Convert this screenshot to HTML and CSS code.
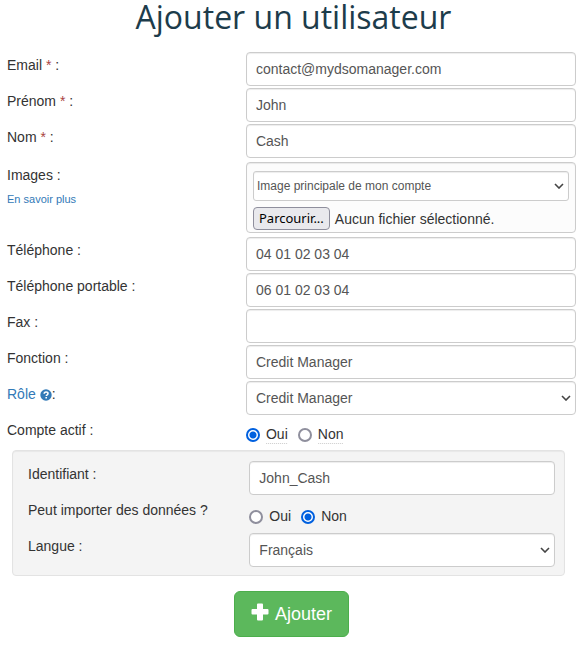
FILE: index.html
```html
<!DOCTYPE html>
<html lang="fr">
<head>
    <meta charset="UTF-8">
    <meta name="viewport" content="width=device-width, initial-scale=1.0">
    <title>Ajouter un utilisateur</title>
    <link rel="stylesheet" href="styles.css">
</head>
<body>
    <h1>Ajouter un utilisateur</h1>
    <form class="user-form">
        <div class="row">
            <label for="email">Email <span class="required">*</span> :</label>
            <input class="form-control" type="email" id="email" value="contact@mydsomanager.com">
        </div>
        <div class="row">
            <label for="prenom">Prénom <span class="required">*</span> :</label>
            <input class="form-control" type="text" id="prenom" value="John">
        </div>
        <div class="row">
            <label for="nom">Nom <span class="required">*</span> :</label>
            <input class="form-control" type="text" id="nom" value="Cash">
        </div>
        <div class="row row-images">
            <div>
                <label for="image-type">Images :</label>
                <a class="more" href="#">En savoir plus</a>
            </div>
            <div class="images-box">
                <div class="select select-small">
                    <select class="form-control" id="image-type">
                        <option>Image principale de mon compte</option>
                    </select>
                    <svg viewBox="0 0 10 6"><path d="M1 1l4 4 4-4"/></svg>
                </div>
                <label class="file" for="image-file">
                    <span class="file-button">Parcourir...</span>
                    <span>Aucun fichier sélectionné.</span>
                    <input type="file" id="image-file">
                </label>
            </div>
        </div>
        <div class="row">
            <label for="telephone">Téléphone :</label>
            <input class="form-control" type="tel" id="telephone" value="04 01 02 03 04">
        </div>
        <div class="row">
            <label for="portable">Téléphone portable :</label>
            <input class="form-control" type="tel" id="portable" value="06 01 02 03 04">
        </div>
        <div class="row">
            <label for="fax">Fax :</label>
            <input class="form-control" type="tel" id="fax">
        </div>
        <div class="row">
            <label for="fonction">Fonction :</label>
            <input class="form-control" type="text" id="fonction" value="Credit Manager">
        </div>
        <div class="row">
            <label for="role"><a href="#">Rôle <svg class="help" viewBox="0 0 12 12"><circle cx="6" cy="6" r="5.7"/><path d="M4.2 4.8C4.2 3.6 5 3 6.1 3c1.1 0 1.900.6 1.900 1.600 0 1.200-1.700 1.200-1.700 2.500M6.200 8v1.500"/></svg></a>:</label>
            <div class="select">
                <select class="form-control" id="role">
                    <option>Credit Manager</option>
                </select>
                <svg viewBox="0 0 10 6"><path d="M1 1l4 4 4-4"/></svg>
            </div>
        </div>
        <div class="row" role="radiogroup" aria-labelledby="actif-label">
            <span class="label" id="actif-label">Compte actif :</span>
            <div class="radios">
                <label><input type="radio" name="actif" checked> <span class="hint">Oui</span></label>
                <label><input type="radio" name="actif"> <span class="hint">Non</span></label>
            </div>
        </div>
        <div class="well">
            <div class="row">
                <label for="identifiant">Identifiant :</label>
                <input class="form-control" type="text" id="identifiant" value="John_Cash">
            </div>
            <div class="row" role="radiogroup" aria-labelledby="import-label">
                <span class="label" id="import-label">Peut importer des données ?</span>
                <div class="radios">
                    <label><input type="radio" name="import"> <span>Oui</span></label>
                    <label><input type="radio" name="import" checked> <span>Non</span></label>
                </div>
            </div>
            <div class="row">
                <label for="langue">Langue :</label>
                <div class="select">
                    <select class="form-control" id="langue">
                        <option>Français</option>
                    </select>
                    <svg viewBox="0 0 10 6"><path d="M1 1l4 4 4-4"/></svg>
                </div>
            </div>
        </div>
        <button class="submit" type="submit">
            <svg viewBox="0 0 18 18"><path d="M7 0.500h4a1 1 0 0 1 1 1V6h4.500a1 1 0 0 1 1 1v3.500a1 1 0 0 1-1 1H12v5a1 1 0 0 1-1 1H7a1 1 0 0 1-1-1v-5H1.500a1 1 0 0 1-1-1V7a1 1 0 0 1 1-1H6V1.500a1 1 0 0 1 1-1z"/></svg>
            Ajouter
        </button>
    </form>
</body>
</html>
```

FILE: styles.css
```css
* {
    box-sizing: border-box;
}

body {
    margin: 0;
    padding: 0 6px 10px 7px;
    background: #fff;
    color: #333;
    font-family: "Liberation Sans", Arial, sans-serif;
    font-size: 14px;
    line-height: 20px;
}

h1 {
    margin: 0 0 18px;
    padding-left: 4px;
    color: #1d3c4b;
    font-family: "Open Sans", sans-serif;
    font-size: 32px;
    font-weight: 400;
    line-height: 34px;
    text-align: center;
}

a {
    color: #337ab7;
    text-decoration: none;
}

.user-form,
.well {
    display: flex;
    flex-direction: column;
    gap: 2px;
}

.row {
    display: grid;
    grid-template-columns: 42% 58%;
}

.row > label,
.row > .label,
.row-images > div:first-child {
    padding-top: 3px;
}

.required {
    color: #a94442;
}

.form-control {
    width: 100%;
    height: 34px;
    padding: 6px 9px;
    border: 1px solid #ccc;
    border-radius: 4px;
    background: #fff;
    box-shadow: inset 0 1px 1px rgba(0, 0, 0, 0.075);
    color: #555;
    font: inherit;
}

.select {
    position: relative;
}

.select .form-control {
    display: block;
    appearance: none;
}

.select svg {
    position: absolute;
    top: 50%;
    right: 5px;
    width: 10px;
    height: 6px;
    margin-top: -3px;
    fill: none;
    stroke: #444;
    stroke-width: 1.6;
    pointer-events: none;
}

.row-images {
    margin: 2px 0;
}

.more {
    display: block;
    margin-top: 4px;
    font-size: 11px;
}

.images-box {
    display: flex;
    flex-direction: column;
    gap: 6px;
    padding: 8px 6px 2px;
    border: 1px solid #ccc;
    border-radius: 4px;
    background: #fcfcfc;
    box-shadow: inset 0 1px 1px rgba(0, 0, 0, 0.075);
}

.select-small .form-control {
    height: 30px;
    padding: 4px 3px;
    border-radius: 3px;
    font-size: 12px;
}

.file {
    display: flex;
    position: relative;
    align-items: center;
    align-self: flex-start;
    gap: 5px;
}

.file-button {
    padding: 1px 5px;
    border: 1px solid #8f8f9d;
    border-radius: 4px;
    background: #e9e9ed;
    color: #000;
    font-family: "Noto Sans", sans-serif;
    font-size: 13px;
    line-height: 19px;
}

.file input {
    position: absolute;
    inset: 0;
    width: 100%;
    opacity: 0;
}

.radios {
    display: flex;
    gap: 10px;
    padding: 7px 0 4px;
}

.radios label {
    display: flex;
    align-items: center;
    gap: 6px;
}

.radios input {
    appearance: none;
    width: 14px;
    height: 14px;
    margin: 2px 0 0;
    border: 2px solid #8f8f9d;
    border-radius: 50%;
    background: #fff;
}

.radios input:checked {
    border-color: #0060df;
    background: radial-gradient(circle, #0060df 3px, #fff 4px);
}

.hint {
    background: linear-gradient(90deg, #ccc 50%, transparent 50%) bottom / 2px 1px repeat-x;
}

.well {
    margin: 0 11px 0 5px;
    padding: 10px 9px 8px 15px;
    border: 1px solid #e3e3e3;
    border-radius: 4px;
    background: #f4f4f4;
    box-shadow: inset 0 1px 1px rgba(0, 0, 0, 0.05);
}

.well .row {
    min-height: 34px;
}

.submit {
    display: flex;
    align-items: center;
    align-self: center;
    gap: 6px;
    margin-top: 13px;
    padding: 10px 16px;
    border: 1px solid #4cae4c;
    border-radius: 6px;
    background: #5cb85c;
    color: #fff;
    font: inherit;
    font-size: 18px;
    line-height: 24px;
}

.submit svg {
    width: 18px;
    height: 18px;
    margin-bottom: 4px;
    fill: #fff;
}

.help {
    width: 12px;
    height: 12px;
    vertical-align: -2px;
}

.help circle {
    fill: #337ab7;
}

.help path {
    fill: none;
    stroke: #fff;
    stroke-width: 1.6;
}
```
